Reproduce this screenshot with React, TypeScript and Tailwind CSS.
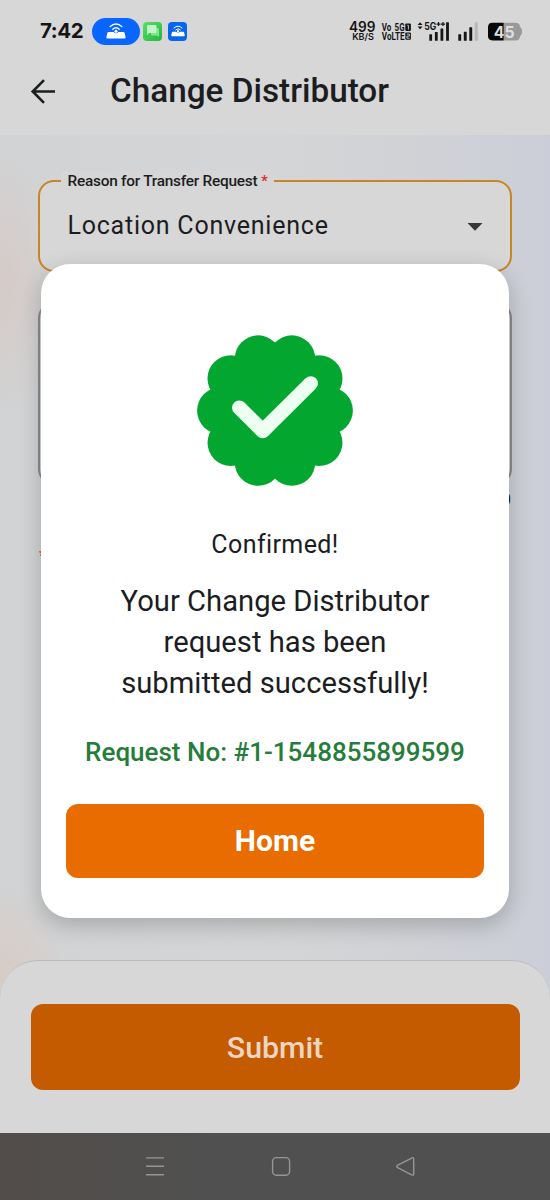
import React from "react";

const BADGE_LOBES = Array.from({ length: 10 }, (_, i) => {
  const angle = (i * Math.PI) / 5;
  return { x: 78 + 54.5 * Math.cos(angle), y: 75.6 + 54.5 * Math.sin(angle) };
});

function RouterGlyph({ className }: { className: string }) {
  return (
    <svg viewBox="0 0 20 16" className={className} fill="none" stroke="white" strokeWidth="1.4" strokeLinecap="round">
      <path d="M4.2 3.6Q10 -1.6 15.8 3.6" />
      <path d="M6.8 6.2Q10 3.2 13.2 6.2" />
      <circle cx="10" cy="8.2" r="1.5" fill="white" stroke="none" />
      <path d="M2.6 9H7.6Q10 11.4 12.4 9H17.4Q18.4 9 18.7 10L19.6 14Q19.8 15.6 18.4 15.6H1.6Q.2 15.6 .4 14L1.3 10Q1.6 9 2.6 9Z" fill="white" stroke="none" />
    </svg>
  );
}

function SystemIndicators() {
  return (
    <svg viewBox="0 0 174 20" className="ml-[162px] h-[20px] w-[174px] overflow-visible" fill="#151515">
      <g fontFamily="Inter" fontWeight="600">
        <text x="0" y="11.3" fontSize="14" textLength="26.5" lengthAdjust="spacingAndGlyphs">499</text>
        <text x="3.2" y="19.2" fontSize="9.2" textLength="21.8" lengthAdjust="spacingAndGlyphs">KB/S</text>
      </g>
      <g fontFamily="Roboto" fontWeight="700" fontSize="10.2">
        <text x="32.8" y="10" textLength="9.5" lengthAdjust="spacingAndGlyphs">Vo</text>
        <text x="45.6" y="10" textLength="10" lengthAdjust="spacingAndGlyphs">5G</text>
        <text x="32.8" y="18.8" fontSize="10" textLength="22.8" lengthAdjust="spacingAndGlyphs">VoLTE</text>
      </g>
      <rect x="56.3" y="2.6" width="5.6" height="7.4" rx="1" />
      <rect x="56.3" y="11.4" width="5.6" height="7.4" rx="1" />
      <path d="M58.3 4.3H59.4V8.6M57.8 13.1H60.4V15.1H57.9V17.2H60.5" fill="none" stroke="#d7d7d7" strokeWidth=".9" />
      <path d="M68.6 4.1L71.1 1.3L73.6 4.1ZM68.6 5.5H73.6L71.1 8.2Z" />
      <text x="75.2" y="8.6" fontFamily="Inter" fontWeight="700" fontSize="10" textLength="12" lengthAdjust="spacingAndGlyphs">5G</text>
      <path d="M87.5 3.1H91.5M89.5 1.1V5.1M92 3.1H96M94 1.1V5.1" stroke="#151515" strokeWidth="1.2" />
      <rect x="80.3" y="13.3" width="2.8" height="6.5" rx=".4" />
      <rect x="85.9" y="11" width="2.8" height="8.8" rx=".4" />
      <rect x="91.5" y="7.5" width="2.8" height="12.3" rx=".4" />
      <rect x="97.1" y="1.2" width="2.8" height="18.6" rx=".4" />
      <rect x="109.3" y="13.3" width="2.9" height="6.5" rx=".4" />
      <rect x="114.8" y="10.7" width="2.9" height="9.1" rx=".4" />
      <rect x="120.3" y="6.3" width="2.9" height="13.5" rx=".4" />
      <rect x="125.8" y="1.2" width="2.9" height="18.6" rx=".4" fill="#b7b7b7" />
      <path d="M154.7 1.8H166.5Q170.5 1.8 171 5.5L172.9 8.5V12.5L171 15.5Q170.5 19.4 166.5 19.4H154.7Z" fill="#999" />
      <path d="M143.5 1.8H154.7V19.4H143.5Q139 19.4 139 15V6.2Q139 1.8 143.5 1.8Z" fill="#070707" />
      <text x="144.8" y="16.6" fontFamily="Inter" fontWeight="700" fontSize="15.4" textLength="20.8" lengthAdjust="spacingAndGlyphs" fill="#dedede">45</text>
    </svg>
  );
}

function StatusBar() {
  return (
    <div className="flex h-[62px] w-full items-center">
      <span className="ml-[40px] w-[43px] font-[Inter] text-[20.5px] leading-none font-bold tracking-[-0.4px] whitespace-nowrap text-[#151515]">7:42</span>
      <div className="ml-[9px] flex h-[27px] w-[48px] items-center justify-center rounded-full bg-[#0866ff]">
        <RouterGlyph className="h-[16px] w-[20px]" />
      </div>
      <div className="ml-[3px] flex h-[19px] w-[19px] items-center justify-center rounded-[4px] bg-gradient-to-br from-[#58df69] to-[#20b63a]">
        <svg viewBox="0 0 14 14" className="h-[14px] w-[14px]">
          <path d="M6 4H12Q13 4 13 5V13L11.5 11.5H6Q5 11.5 5 10.5V5Q5 4 6 4Z" fill="#83e38f" />
          <path d="M2 1H9.5Q10.5 1 10.5 2V8Q10.5 9 9.5 9H3L1 11V2Q1 1 2 1Z" fill="#c4f4c9" />
        </svg>
      </div>
      <div className="ml-[6px] flex h-[19px] w-[19px] items-center justify-center rounded-[4px] bg-[#0866ee]">
        <RouterGlyph className="h-[12px] w-[14px]" />
      </div>
      <SystemIndicators />
    </div>
  );
}

function Header() {
  return (
    <header className="h-[135px] w-full shrink-0 bg-[#d7d7d7]">
      <StatusBar />
      <div className="flex h-[58px] items-center pl-[30px]">
        <svg viewBox="0 0 26 26" className="h-[26px] w-[26px]" fill="none" stroke="#1b1d1e" strokeWidth="2.6">
          <path d="M25 13.5H2.5M14 2.2L2.7 13.5L14 24.8" />
        </svg>
        <h1 className="ml-[54px] text-[33.3px] leading-none font-medium whitespace-nowrap text-[#1b1d1f]">Change Distributor</h1>
      </div>
    </header>
  );
}

function ReasonForm() {
  return (
    <section className="h-[825px] shrink-0 px-[38px] pt-[45px]">
      <div className="relative h-[92px] w-[474px] rounded-[16px] border-2 border-[#c98423] bg-[#d7d7d7]">
        <span className="absolute -top-[11px] left-[21px] bg-[#d6d6d6] px-[6.5px] text-[15.4px] leading-[20px] font-medium tracking-[-0.24px] whitespace-nowrap text-[#1b1d1f]">
          Reason for Transfer Request <span className="text-[#d72c31]">*</span>
        </span>
        <div className="flex h-full items-center justify-between pr-[27.5px] pb-[2px] pl-[27.5px]">
          <span className="text-[25px] leading-none tracking-[0.77px] text-[#1b1d1f]">Location Convenience</span>
          <svg viewBox="0 0 16 8" className="mt-[3px] h-[8px] w-[16px]"><path d="M.5 0H15.5L8 7.8Z" fill="#343638" /></svg>
        </div>
      </div>
      <div className="mt-[30px] h-[183px] rounded-[16px] border-2 border-[#8a8c8e] bg-[#d7d7d7]" />
      <div className="mt-[4px] pr-[1px] text-right text-[17px] leading-[20px] font-medium text-[#1b1d1f]">0</div>
      <div className="mt-[37px] pl-[1px] text-[16px] leading-[20px] text-[#d72c31]">*</div>
    </section>
  );
}

function SubmitPanel() {
  return (
    <section className="flex h-[173px] items-start rounded-t-[38px] border-t border-[#babbc0] bg-[#d7d7d7] pt-[43px] pl-[30.5px]">
      <button className="h-[86px] w-[489px] rounded-[12px] bg-[#c45b00] pt-[2px] text-[30.3px] font-medium text-[#edd5c1]">Submit</button>
    </section>
  );
}

function NavigationBar() {
  return (
    <nav className="h-[67px] w-full shrink-0 bg-gradient-to-r from-[#524d4a] via-[#505050] via-40% to-[#505050]">
      <svg viewBox="0 0 550 67" className="h-full w-full" fill="none" stroke="#969696" strokeWidth="1.4">
        <path d="M146 24.9H164M146 33.3H164M146 41.7H164" />
        <rect x="272.6" y="24.6" width="17" height="17.6" rx="3.7" />
        <path d="M397.7 32.2L411.7 25.1Q413.7 24.2 413.7 26.2V40.8Q413.7 42.8 411.7 41.8L397.7 34.7Q395.8 33.5 397.7 32.2Z" />
      </svg>
    </nav>
  );
}

function ConfirmationDialog() {
  return (
    <div role="dialog" className="absolute top-[264px] left-[41px] flex h-[654px] w-[468px] flex-col items-center rounded-[29px] bg-white px-[25px] pt-[71px] text-[#1b1d1f] shadow-[0_7px_22px_1px_rgba(0,0,0,0.2)]">
      <svg viewBox="0 0 156 152" className="h-[152px] w-[156px] shrink-0">
        <g fill="#03a730">
          <circle cx="78" cy="75.6" r="59" />
          {BADGE_LOBES.map((lobe, index) => <circle key={index} cx={lobe.x} cy={lobe.y} r="23.4" />)}
        </g>
        <path d="M42.3 72.7L65.7 96L113.7 48.4" fill="none" stroke="#ecfff0" strokeWidth="14.5" strokeLinecap="round" strokeLinejoin="round" />
      </svg>
      <p className="mt-[43px] text-[25px] leading-[30px] tracking-[0.4px]">Confirmed!</p>
      <h2 className="mt-[21px] text-center text-[29.2px] leading-[41px] font-normal whitespace-nowrap">
        Your Change Distributor<br />request has been<br />submitted successfully!
      </h2>
      <p className="mt-[32px] text-[26px] leading-[32px] font-medium whitespace-nowrap text-[#267d3b]">Request No: #1-1548855899599</p>
      <button className="mt-[35.5px] h-[74px] w-[418px] shrink-0 rounded-[12px] bg-[#e86c00] text-[30px] font-bold text-white">Home</button>
    </div>
  );
}

export default function App() {
  return (
    <div className="relative flex h-[1200px] w-[550px] flex-col overflow-hidden bg-[#d7d7d7] font-[Roboto,sans-serif]">
      <Header />
      <main className="h-[998px] shrink-0 bg-[radial-gradient(ellipse_60px_130px_at_0px_150px,#d5cac7,transparent),radial-gradient(ellipse_65px_90px_at_0px_840px,#d8cbc4,transparent),linear-gradient(90deg,#d2d3d4_0%,#d4d5d6_50%,#d0d2d6_75%,#cbced8_100%)]">
        <ReasonForm />
        <SubmitPanel />
      </main>
      <NavigationBar />
      <ConfirmationDialog />
    </div>
  );
}
